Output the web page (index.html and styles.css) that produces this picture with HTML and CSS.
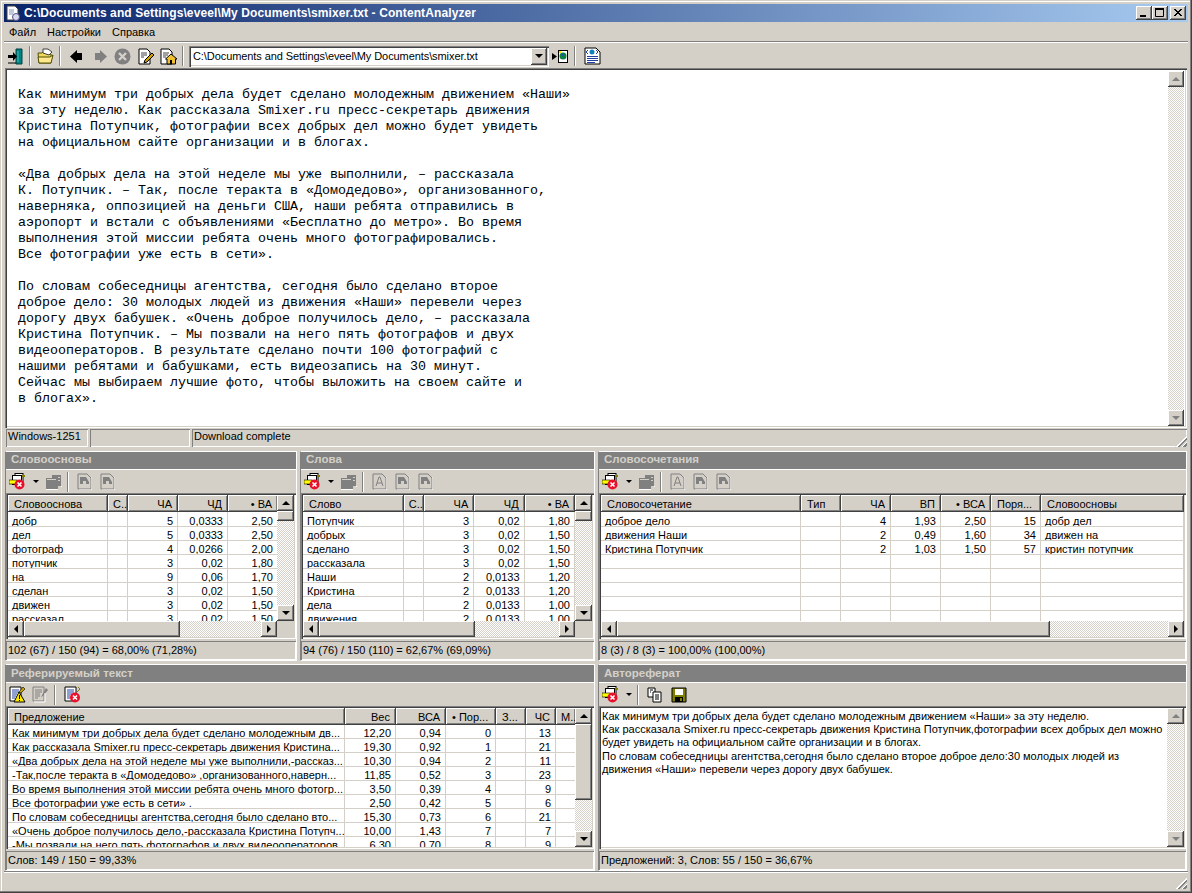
FILE: index.html
```html
<!DOCTYPE html>
<html>
	<head>
		<title>ContentAnalyzer</title>
		<link rel="stylesheet" href="styles.css">
	</head>
	<body>
		<svg class="defs" width="0" height="0">
			<defs>
				<symbol id="i-clear" viewBox="0 0 17 17">
					<rect x="6" y="0.5" width="8" height="9" fill="#fff" stroke="#000"/>
					<rect x="3.5" y="2.5" width="9" height="9" fill="#fff" stroke="#000"/>
					<rect x="0" y="7" width="8" height="4" fill="#ffff00" stroke="#000" stroke-width="0.6"/>
					<rect x="13" y="2" width="3" height="2" fill="#808000"/>
					<circle cx="10.5" cy="11.5" r="5" fill="#e8102a"/>
					<path d="M8.5 9.5l4 4M12.5 9.5l-4 4" stroke="#fff" stroke-width="1.6"/>
				</symbol>
				<symbol id="i-copy-off" viewBox="0 0 17 17">
					<path d="M6 1h10v12h-3v3H1V5h5z" fill="#808080"/>
					<path d="M6 1h10v1H7v3H6zM2 6h9v1H2zM13 4h2v1h-2zM13 7h2v1h-2z" fill="#d4d0c8"/>
					<path d="M1 16h12v1H1zM16 13h1v1h-1z" fill="#fff"/>
				</symbol>
				<symbol id="i-doc-off" viewBox="0 0 15 17">
					<path d="M1 1h9l4 4v11H1z" fill="#d4d0c8" stroke="#808080"/>
					<path d="M3 4h6l3 5v2H9V8H6v3H3z" fill="#808080"/>
					<path d="M15 4v13H2" stroke="#fff" fill="none"/>
				</symbol>
				<symbol id="i-doc-a" viewBox="0 0 15 17">
					<path d="M1 1h9l4 4v11H1z" fill="#d4d0c8" stroke="#808080"/>
					<path d="M4 13l3-9h1l3 9M5 10h5" stroke="#808080" fill="none"/>
					<path d="M15 4v13H2" stroke="#fff" fill="none"/>
				</symbol>
			</defs>
		</svg>

		<div class="window">
			<div class="titlebar">
				<svg class="appicon" width="16" height="16" viewBox="0 0 16 16">
					<path d="M2 1h8l3 3v11H2z" fill="#fff" stroke="#404040"/>
					<circle cx="11" cy="12" r="3.5" fill="#d8d8f0" stroke="#505080"/>
					<path d="M4 5h5M4 7h5M4 9h4" stroke="#8090c0"/>
				</svg>
				<span class="titletext">C:\Documents and Settings\eveel\My Documents\smixer.txt - ContentAnalyzer</span>
				<div class="capbtns">
					<span class="capbtn"><svg width="16" height="14"><rect x="4" y="9" width="6" height="2" fill="#000"/></svg></span>
					<span class="capbtn"><svg width="16" height="14"><path d="M3.5 2.5h8v8h-8z" fill="none" stroke="#000"/><rect x="3" y="2" width="9" height="2" fill="#000"/></svg></span>
					<span class="capbtn capclose"><svg width="16" height="14"><path d="M4 3l7 7M5 3l7 7M11 3l-7 7M12 3l-7 7" stroke="#000"/></svg></span>
				</div>
			</div>

			<div class="menubar">
				<span>Файл</span>
				<span>Настройки</span>
				<span>Справка</span>
			</div>

			<div class="mainbar">
				<svg class="ic" width="17" height="17" viewBox="0 0 17 17">
					<path d="M9 1h6v15H9z" fill="#008080" stroke="#004040"/>
					<path d="M11 3v11" stroke="#40c0c0"/>
					<path d="M1 7h5V4l4 4.5L6 13v-3H1z" fill="#000"/>
					<path d="M1 15h8" stroke="#000"/>
				</svg>
				<i class="sep"></i>
				<svg class="ic" width="17" height="17" viewBox="0 0 17 17">
					<path d="M1 5h4l1-1h5v2h3v9H2z" fill="#f0d860" stroke="#505000"/>
					<path d="M6 1l5 0 4 3-3 3-6-2z" fill="#fff" stroke="#404040"/>
					<path d="M1 9h12l3-2-2 8H2z" fill="#ffe890" stroke="#505000"/>
				</svg>
				<i class="sep"></i>
				<svg class="ic ic-back" width="13" height="13" viewBox="0 0 13 13"><path d="M0 6.5L7 0v3h5v7H7v3z" fill="#000"/></svg>
				<svg class="ic ic-fwd" width="13" height="13" viewBox="0 0 13 13"><path d="M13 6.5L6 0v3H1v7h5v3z" fill="#808080"/></svg>
				<svg class="ic ic-stop" width="17" height="17" viewBox="0 0 17 17">
					<circle cx="8.5" cy="8.5" r="8" fill="#808080"/>
					<path d="M5 5l7 7M12 5l-7 7" stroke="#d4d0c8" stroke-width="2.4"/>
				</svg>
				<svg class="ic ic-edit" width="17" height="17" viewBox="0 0 17 17">
					<path d="M2 1h8l3 3v12H2z" fill="#fff" stroke="#000"/>
					<path d="M4 5h6M4 7h6M4 9h3" stroke="#404040"/>
					<path d="M15 5l2 2-7 7-3 1 1-3z" fill="#d0a000" stroke="#000"/>
				</svg>
				<svg class="ic ic-home" width="17" height="17" viewBox="0 0 17 17">
					<path d="M1 1h8l3 3v12H1z" fill="#fff" stroke="#000"/>
					<path d="M3 5h6M3 7h5M3 9h3" stroke="#404040"/>
					<path d="M11 6l6 5h-1.500v5H7v-5H5.500z" fill="#f0c030" stroke="#000"/>
					<rect x="10" y="12" width="2" height="4" fill="#000"/>
				</svg>
				<i class="sep"></i>
				<div class="combo">
					<span class="combotext">C:\Documents and Settings\eveel\My Documents\smixer.txt</span>
					<span class="btn combobtn"><b class="arrow-down"></b></span>
				</div>
				<svg class="ic ic-go" width="17" height="17" viewBox="0 0 17 17">
					<path d="M0 5l5 3.500L0 12z" fill="#000"/>
					<rect x="6.500" y="2.500" width="9" height="12" fill="#fff" stroke="#000"/>
					<circle cx="11" cy="8" r="3.500" fill="#108040"/>
					<path d="M9 6h3v2h-2z" fill="#2050c0"/>
					<path d="M7 3h2v2H7z" fill="#ffe000"/>
				</svg>
				<i class="sep sep-wide"></i>
				<svg class="ic" width="17" height="18" viewBox="0 0 17 18">
					<path d="M1 1h11l4 4v12H1z" fill="#fff" stroke="#000"/>
					<circle cx="8" cy="5" r="2.500" fill="#1080c0"/>
					<path d="M4 3L2 5l2 2M12 3l2 2-2 2" stroke="#2040a0" fill="none"/>
					<path d="M3 9.500h11M3 11.500h11M3 13.500h11M3 15.500h8" stroke="#2040a0"/>
				</svg>
			</div>

			<div class="editor sunken">
				<pre class="editortext">Как минимум три добрых дела будет сделано молодежным движением «Наши»
за эту неделю. Как рассказала Smixer.ru пресс-секретарь движения
Кристина Потупчик, фотографии всех добрых дел можно будет увидеть
на официальном сайте организации и в блогах.

«Два добрых дела на этой неделе мы уже выполнили, – рассказала
К. Потупчик. – Так, после теракта в «Домодедово», организованного,
наверняка, оппозицией на деньги США, наши ребята отправились в
аэропорт и встали с объявлениями «Бесплатно до метро». Во время
выполнения этой миссии ребята очень много фотографировались.
Все фотографии уже есть в сети».

По словам собеседницы агентства, сегодня было сделано второе
доброе дело: 30 молодых людей из движения «Наши» перевели через
дорогу двух бабушек. «Очень доброе получилось дело, – рассказала
Кристина Потупчик. – Мы позвали на него пять фотографов и двух
видеооператоров. В результате сделано почти 100 фотографий с
нашими ребятами и бабушками, есть видеозапись на 30 минут.
Сейчас мы выбираем лучшие фото, чтобы выложить на своем сайте и
в блогах».</pre>
				<div class="vscroll">
					<span class="btn sbtn"><b class="arrow-up off"></b></span>
					<span class="track"></span>
					<span class="btn sbtn"><b class="arrow-down off"></b></span>
				</div>
			</div>

			<div class="editorstatus">
				<span class="pane pane-enc">Windows-1251</span>
				<span class="pane pane-mid"></span>
				<span class="pane pane-msg">Download complete</span>
				<span class="grip"></span>
			</div>

			<div class="panelrow row-top">
				<section class="panel panel-stems">
					<h2 class="paneltitle">Словоосновы</h2>
					<div class="paneltools">
						<svg class="ic" width="17" height="17"><use href="#i-clear"/></svg>
						<b class="arrow-small"></b>
						<svg class="ic ic-near" width="17" height="17"><use href="#i-copy-off"/></svg>
						<i class="sep"></i>
						<svg class="ic" width="15" height="17"><use href="#i-doc-off"/></svg>
						<svg class="ic ic-gap" width="15" height="17"><use href="#i-doc-off"/></svg>
					</div>
					<div class="list sunken">
						<div class="listbody">
							<table class="grid">
								<colgroup><col class="w100"><col class="w20"><col class="w50"><col class="w50"><col class="w50"></colgroup>
								<thead><tr><th>Словооснова</th><th class="tight">С..</th><th class="r">ЧА</th><th class="r">ЧД</th><th class="r">• ВА</th></tr></thead>
								<tbody>
									<tr><td>добр</td><td></td><td class="r">5</td><td class="r">0,0333</td><td class="r">2,50</td></tr>
									<tr><td>дел</td><td></td><td class="r">5</td><td class="r">0,0333</td><td class="r">2,50</td></tr>
									<tr><td>фотограф</td><td></td><td class="r">4</td><td class="r">0,0266</td><td class="r">2,00</td></tr>
									<tr><td>потупчик</td><td></td><td class="r">3</td><td class="r">0,02</td><td class="r">1,80</td></tr>
									<tr><td>на</td><td></td><td class="r">9</td><td class="r">0,06</td><td class="r">1,70</td></tr>
									<tr><td>сделан</td><td></td><td class="r">3</td><td class="r">0,02</td><td class="r">1,50</td></tr>
									<tr><td>движен</td><td></td><td class="r">3</td><td class="r">0,02</td><td class="r">1,50</td></tr>
									<tr><td>рассказал</td><td></td><td class="r">3</td><td class="r">0,02</td><td class="r">1,50</td></tr>
								</tbody>
							</table>
						</div>
						<div class="vscroll">
							<span class="btn sbtn"><b class="arrow-up"></b></span>
							<span class="btn thumb thumb-small"></span>
							<span class="track"></span>
							<span class="btn sbtn"><b class="arrow-down"></b></span>
						</div>
						<div class="hscroll">
							<span class="btn sbtn"><b class="arrow-left"></b></span>
							<span class="btn thumb thumb-stems"></span>
							<span class="track"></span>
							<span class="btn sbtn"><b class="arrow-right"></b></span>
						</div>
						<div class="corner"></div>
					</div>
					<div class="panelstatus">102 (67) / 150 (94) = 68,00% (71,28%)</div>
				</section>

				<section class="panel panel-words">
					<h2 class="paneltitle">Слова</h2>
					<div class="paneltools">
						<svg class="ic" width="17" height="17"><use href="#i-clear"/></svg>
						<b class="arrow-small"></b>
						<svg class="ic ic-near" width="17" height="17"><use href="#i-copy-off"/></svg>
						<i class="sep"></i>
						<svg class="ic" width="15" height="17"><use href="#i-doc-a"/></svg>
						<svg class="ic ic-gap" width="15" height="17"><use href="#i-doc-off"/></svg>
						<svg class="ic ic-gap" width="15" height="17"><use href="#i-doc-off"/></svg>
					</div>
					<div class="list sunken">
						<div class="listbody">
							<table class="grid">
								<colgroup><col class="w100"><col class="w20"><col class="w50"><col class="w50"><col class="w50"></colgroup>
								<thead><tr><th>Слово</th><th class="tight">С..</th><th class="r">ЧА</th><th class="r">ЧД</th><th class="r">• ВА</th></tr></thead>
								<tbody>
									<tr><td>Потупчик</td><td></td><td class="r">3</td><td class="r">0,02</td><td class="r">1,80</td></tr>
									<tr><td>добрых</td><td></td><td class="r">3</td><td class="r">0,02</td><td class="r">1,50</td></tr>
									<tr><td>сделано</td><td></td><td class="r">3</td><td class="r">0,02</td><td class="r">1,50</td></tr>
									<tr><td>рассказала</td><td></td><td class="r">3</td><td class="r">0,02</td><td class="r">1,50</td></tr>
									<tr><td>Наши</td><td></td><td class="r">2</td><td class="r">0,0133</td><td class="r">1,20</td></tr>
									<tr><td>Кристина</td><td></td><td class="r">2</td><td class="r">0,0133</td><td class="r">1,20</td></tr>
									<tr><td>дела</td><td></td><td class="r">2</td><td class="r">0,0133</td><td class="r">1,00</td></tr>
									<tr><td>движения</td><td></td><td class="r">2</td><td class="r">0,0133</td><td class="r">1,00</td></tr>
								</tbody>
							</table>
						</div>
						<div class="vscroll">
							<span class="btn sbtn"><b class="arrow-up"></b></span>
							<span class="btn thumb thumb-small"></span>
							<span class="track"></span>
							<span class="btn sbtn"><b class="arrow-down"></b></span>
						</div>
						<div class="hscroll">
							<span class="btn sbtn"><b class="arrow-left"></b></span>
							<span class="btn thumb thumb-stems"></span>
							<span class="track"></span>
							<span class="btn sbtn"><b class="arrow-right"></b></span>
						</div>
						<div class="corner"></div>
					</div>
					<div class="panelstatus">94 (76) / 150 (110) = 62,67% (69,09%)</div>
				</section>

				<section class="panel panel-phrases">
					<h2 class="paneltitle">Словосочетания</h2>
					<div class="paneltools">
						<svg class="ic" width="17" height="17"><use href="#i-clear"/></svg>
						<b class="arrow-small"></b>
						<svg class="ic ic-near" width="17" height="17"><use href="#i-copy-off"/></svg>
						<i class="sep"></i>
						<svg class="ic" width="15" height="17"><use href="#i-doc-a"/></svg>
						<svg class="ic ic-gap" width="15" height="17"><use href="#i-doc-off"/></svg>
						<svg class="ic ic-gap" width="15" height="17"><use href="#i-doc-off"/></svg>
					</div>
					<div class="list list-nov sunken">
						<div class="listbody">
							<table class="grid">
								<colgroup><col class="w200"><col class="w40"><col class="w50"><col class="w50"><col class="w50"><col class="w50"><col></colgroup>
								<thead><tr><th>Словосочетание</th><th>Тип</th><th class="r">ЧА</th><th class="r">ВП</th><th class="r">• ВСА</th><th>Поря...</th><th>Словоосновы</th></tr></thead>
								<tbody>
									<tr><td>доброе дело</td><td></td><td class="r">4</td><td class="r">1,93</td><td class="r">2,50</td><td class="r">15</td><td>добр дел</td></tr>
									<tr><td>движения Наши</td><td></td><td class="r">2</td><td class="r">0,49</td><td class="r">1,60</td><td class="r">34</td><td>движен на</td></tr>
									<tr><td>Кристина Потупчик</td><td></td><td class="r">2</td><td class="r">1,03</td><td class="r">1,50</td><td class="r">57</td><td>кристин потупчик</td></tr>
									<tr><td></td><td></td><td></td><td></td><td></td><td></td><td></td></tr>
									<tr><td></td><td></td><td></td><td></td><td></td><td></td><td></td></tr>
									<tr><td></td><td></td><td></td><td></td><td></td><td></td><td></td></tr>
									<tr><td></td><td></td><td></td><td></td><td></td><td></td><td></td></tr>
									<tr><td></td><td></td><td></td><td></td><td></td><td></td><td></td></tr>
								</tbody>
							</table>
						</div>
						<div class="hscroll">
							<span class="btn sbtn"><b class="arrow-left"></b></span>
							<span class="btn thumb thumb-phrases"></span>
							<span class="track"></span>
							<span class="btn sbtn"><b class="arrow-right"></b></span>
						</div>
					</div>
					<div class="panelstatus">8 (3) / 8 (3) = 100,00% (100,00%)</div>
				</section>
			</div>

			<div class="panelrow row-bottom">
				<section class="panel panel-source">
					<h2 class="paneltitle">Реферируемый текст</h2>
					<div class="paneltools">
						<svg class="ic" width="17" height="17" viewBox="0 0 17 17">
							<path d="M1 1h11v14H1z" fill="#fff" stroke="#000"/>
							<path d="M3 4h7M3 6h7M3 8h5M3 10h4M3 12h3" stroke="#2040a0"/>
							<path d="M10 6l6 10H5z" fill="#ffe800" stroke="#000"/>
							<path d="M10.500 9v4M10.500 14v1" stroke="#000"/>
							<path d="M14 1l2 2-4 4-2-1z" fill="#d0a000" stroke="#000" stroke-width="0.6"/>
						</svg>
						<svg class="ic ic-near" width="17" height="17" viewBox="0 0 17 17">
							<path d="M1 1h11v14H1z" fill="#d4d0c8" stroke="#808080"/>
							<path d="M3 4h7M3 6h7M3 8h5M3 10h5M3 12h3" stroke="#808080"/>
							<path d="M14 2l2 2-5 6-2 1z" fill="#808080"/>
							<path d="M13 7v9H2" stroke="#fff" fill="none"/>
						</svg>
						<i class="sep"></i>
						<svg class="ic" width="17" height="17" viewBox="0 0 17 17">
							<path d="M1 1h11v14H1z" fill="#fff" stroke="#000"/>
							<path d="M3 4h7M3 6h7M3 8h5M3 10h3M3 12h3" stroke="#2040a0"/>
							<path d="M14 1l2 2-3 3" stroke="#808000" fill="none"/>
							<circle cx="11" cy="11.500" r="5" fill="#e8102a"/>
							<path d="M9 9.500l4 4M13 9.500l-4 4" stroke="#fff" stroke-width="1.600"/>
						</svg>
					</div>
					<div class="list list-noh sunken">
						<div class="listbody">
							<table class="grid">
								<colgroup><col class="w337"><col class="w51"><col class="w50"><col class="w50"><col class="w30"><col class="w30"><col class="w20"></colgroup>
								<thead><tr><th>Предложение</th><th class="r">Вес</th><th class="r">ВСА</th><th>• Пор...</th><th>З...</th><th class="r">ЧС</th><th class="tight">М..</th></tr></thead>
								<tbody>
									<tr><td>Как минимум три добрых дела будет сделано молодежным дв...</td><td class="r">12,20</td><td class="r">0,94</td><td class="r">0</td><td></td><td class="r">13</td><td></td></tr>
									<tr><td>Как рассказала Smixer.ru пресс-секретарь движения Кристина...</td><td class="r">19,30</td><td class="r">0,92</td><td class="r">1</td><td></td><td class="r">21</td><td></td></tr>
									<tr><td>«Два добрых дела на этой неделе мы уже выполнили,-рассказ...</td><td class="r">10,30</td><td class="r">0,94</td><td class="r">2</td><td></td><td class="r">11</td><td></td></tr>
									<tr><td>-Так,после теракта в «Домодедово» ,организованного,наверн...</td><td class="r">11,85</td><td class="r">0,52</td><td class="r">3</td><td></td><td class="r">23</td><td></td></tr>
									<tr><td>Во время выполнения этой миссии ребята очень много фотогр...</td><td class="r">3,50</td><td class="r">0,39</td><td class="r">4</td><td></td><td class="r">9</td><td></td></tr>
									<tr><td>Все фотографии уже есть в сети» .</td><td class="r">2,50</td><td class="r">0,42</td><td class="r">5</td><td></td><td class="r">6</td><td></td></tr>
									<tr><td>По словам собеседницы агентства,сегодня было сделано вто...</td><td class="r">15,30</td><td class="r">0,73</td><td class="r">6</td><td></td><td class="r">21</td><td></td></tr>
									<tr><td>«Очень доброе получилось дело,-рассказала Кристина Потупч...</td><td class="r">10,00</td><td class="r">1,43</td><td class="r">7</td><td></td><td class="r">7</td><td></td></tr>
									<tr><td>-Мы позвали на него пять фотографов и двух видеооператоров...</td><td class="r">6,30</td><td class="r">0,70</td><td class="r">8</td><td></td><td class="r">9</td><td></td></tr>
								</tbody>
							</table>
						</div>
						<div class="vscroll">
							<span class="btn sbtn"><b class="arrow-up"></b></span>
							<span class="btn thumb thumb-source"></span>
							<span class="track"></span>
							<span class="btn sbtn"><b class="arrow-down"></b></span>
						</div>
					</div>
					<div class="panelstatus">Слов: 149 / 150 = 99,33%</div>
				</section>

				<section class="panel panel-abstract">
					<h2 class="paneltitle">Автореферат</h2>
					<div class="paneltools">
						<svg class="ic" width="17" height="17"><use href="#i-clear"/></svg>
						<b class="arrow-small"></b>
						<i class="sep"></i>
						<svg class="ic" width="16" height="16" viewBox="0 0 16 16">
							<path d="M1 1h7v9H1z" fill="#fff" stroke="#000"/>
							<path d="M6 5h8v10H6z" fill="#fff" stroke="#000"/>
							<path d="M3 3h3M3 5h1M8 8h4M8 10h4M8 12h4" stroke="#000"/>
						</svg>
						<svg class="ic ic-gap" width="16" height="16" viewBox="0 0 16 16">
							<path d="M1 1h14v14H1z" fill="#808000" stroke="#000"/>
							<rect x="4" y="2" width="8" height="6" fill="#fff"/>
							<rect x="4" y="10" width="8" height="5" fill="#000"/>
							<rect x="9" y="11" width="2" height="3" fill="#808000"/>
						</svg>
					</div>
					<div class="list list-noh sunken">
						<div class="abstracttext">Как минимум три добрых дела будет сделано молодежным движением «Наши» за эту неделю.<br>Как рассказала Smixer.ru пресс-секретарь движения Кристина Потупчик,фотографии всех добрых дел можно будет увидеть на официальном сайте организации и в блогах.<br>По словам собеседницы агентства,сегодня было сделано второе доброе дело:30 молодых людей из движения «Наши» перевели через дорогу двух бабушек.</div>
						<div class="vscroll">
							<span class="btn sbtn"><b class="arrow-up off"></b></span>
							<span class="track"></span>
							<span class="btn sbtn"><b class="arrow-down off"></b></span>
						</div>
					</div>
					<div class="panelstatus">Предложений: 3, Слов: 55 / 150 = 36,67%</div>
				</section>
			</div>

			<div class="windowstatus">
				<span class="grip"></span>
			</div>
		</div>
	</body>
</html>
```

FILE: styles.css
```css
* {
	box-sizing: border-box;
}

body {
	margin: 0;
	background: #d4d0c8;
	font-family: "Liberation Sans", Arial, sans-serif;
	font-size: 11px;
	color: #000;
}

.defs {
	position: absolute;
}

.window {
	width: 1192px;
	height: 893px;
	display: flex;
	flex-direction: column;
	overflow: hidden;
	padding: 4px 4px 3px 4px;
	background: #d4d0c8;
	box-shadow: inset -1px -1px #404040, inset -2px -2px #808080, inset 1px 1px #d4d0c8, inset 2px 2px #fff;
}

/* title bar */
.titlebar {
	flex: 0 0 18px;
	display: flex;
	align-items: center;
	padding: 0 2px 0 1px;
	background: linear-gradient(to right, #0a246a, #a6caf0);
}

.appicon {
	flex: none;
}

.titletext {
	margin-left: 3px;
	font-weight: bold;
	font-size: 12px;
	letter-spacing: 0.11px;
	color: #fff;
	white-space: nowrap;
}

.capbtns {
	display: flex;
	margin-left: auto;
}

.capbtn {
	width: 16px;
	height: 14px;
	display: block;
	background: #d4d0c8;
	box-shadow: inset -1px -1px #404040, inset 1px 1px #fff, inset -2px -2px #808080;
}

.capbtn svg {
	display: block;
}

.capclose {
	margin-left: 2px;
}

/* menu */
.menubar {
	flex: 0 0 20px;
	display: flex;
	align-items: center;
	padding-left: 5px;
	gap: 11px;
	border-bottom: 1px solid #808080;
	box-shadow: 0 1px #fff;
}

/* main toolbar */
.mainbar {
	flex: 0 0 26px;
	display: flex;
	align-items: center;
	padding: 2px 0 0 3px;
}

.ic {
	flex: none;
	display: block;
}

.sep {
	flex: none;
	width: 2px;
	height: 20px;
	margin: 0 6px 0 5px;
	background: #808080;
	border-right: 1px solid #fff;
}

.sep-wide {
	margin-right: 8px;
}

.ic-back {
	margin-left: 3px;
}

.ic-fwd {
	margin-left: 11px;
}

.ic-stop {
	margin-left: 7px;
}

.ic-edit,
.ic-home {
	margin-left: 6px;
}

.combo {
	width: 360px;
	height: 21px;
	margin-left: -1px;
	display: flex;
	padding: 2px;
	background: #fff;
	box-shadow: inset 1px 1px #808080, inset 2px 2px #404040, inset -1px -1px #fff, inset -2px -2px #d4d0c8;
}

.combotext {
	flex: 1;
	padding: 2px 0 0 2px;
	letter-spacing: -0.08px;
	white-space: nowrap;
	overflow: hidden;
}

.combobtn {
	flex: 0 0 16px;
}

.ic-go {
	margin-left: 3px;
}

/* shared bevels */
.sunken {
	padding: 2px;
	box-shadow: inset 1px 1px #808080, inset 2px 2px #404040, inset -1px -1px #fff, inset -2px -2px #d4d0c8;
}

.btn {
	display: flex;
	align-items: center;
	justify-content: center;
	background: #d4d0c8;
	box-shadow: inset -1px -1px #404040, inset 1px 1px #fff, inset -2px -2px #808080;
}

.arrow-up,
.arrow-down {
	width: 0;
	height: 0;
	border-left: 4px solid transparent;
	border-right: 4px solid transparent;
}

.arrow-up {
	border-bottom: 4px solid #000;
}

.arrow-down {
	border-top: 4px solid #000;
}

.arrow-up.off {
	border-bottom-color: #808080;
}

.arrow-down.off {
	border-top-color: #808080;
}

.arrow-left,
.arrow-right {
	width: 0;
	height: 0;
	border-top: 4px solid transparent;
	border-bottom: 4px solid transparent;
}

.arrow-left {
	border-right: 4px solid #000;
}

.arrow-right {
	border-left: 4px solid #000;
}

.arrow-small {
	flex: none;
	width: 0;
	height: 0;
	margin: 0 0 0 7px;
	border-left: 3px solid transparent;
	border-right: 3px solid transparent;
	border-top: 3px solid #000;
}

/* scrollbars */
.vscroll,
.hscroll {
	display: flex;
	min-height: 0;
}

.vscroll {
	flex-direction: column;
}

.sbtn {
	flex: 0 0 16px;
}

.track {
	flex: 1;
	background: repeating-conic-gradient(#d4d0c8 0 25%, #fff 0 50%) 0 0 / 2px 2px;
}

.thumb-small {
	flex: 0 0 10px;
}

.thumb-stems {
	flex: 0 0 156px;
}

.thumb-phrases {
	flex: 0 0 433px;
}

.thumb-source {
	flex: 0 0 76px;
}

/* editor */
.editor {
	flex: 0 0 360px;
	display: flex;
	margin: 0 1px 0 1px;
	padding: 3px 3px 2px 2px;
	background: #fff;
}

.editortext {
	flex: 1;
	margin: 0;
	padding: 16px 0 0 11px;
	font-family: "Liberation Mono", "Courier New", monospace;
	font-size: 13.33px;
	line-height: 16px;
	overflow: hidden;
}

.editor .vscroll {
	flex: 0 0 16px;
}

.editorstatus {
	flex: 0 0 20px;
	display: flex;
	gap: 2px;
	padding: 1px 0 0 2px;
	position: relative;
}

.pane {
	height: 18px;
	padding: 0 0 0 2px;
	box-shadow: inset 1px 1px #808080, inset -1px -1px #fff;
	line-height: 14px;
}

.pane-enc {
	width: 82px;
}

.pane-mid {
	width: 100px;
}

.pane-msg {
	flex: 1;
	margin-right: 1px;
}

.grip {
	position: absolute;
	right: 1px;
	bottom: 1px;
	width: 12px;
	height: 12px;
	background: repeating-linear-gradient(135deg, #d4d0c8 0 1px, #fff 1px 2px, #808080 2px 4px);
	clip-path: polygon(100% 0, 100% 100%, 0 100%);
}

/* panels */
.panelrow {
	display: flex;
	gap: 3px;
	padding: 0 1px;
	min-height: 0;
}

.row-top {
	flex: 0 0 210px;
	margin-top: 3px;
}

.row-bottom {
	flex: 0 0 207px;
	margin-top: 3px;
}

.panel {
	display: flex;
	flex-direction: column;
	min-height: 0;
	border: 1px solid;
	border-color: #fff #fff #fff #808080;
}

.panel-stems {
	width: 292px;
}

.panel-words {
	width: 295px;
}

.panel-phrases {
	flex: 1;
	min-width: 0;
}

.panel-source {
	width: 590px;
}

.panel-abstract {
	flex: 1;
	min-width: 0;
}

.paneltitle {
	flex: 0 0 18px;
	margin: 0;
	padding: 0 0 0 5px;
	background: #808080;
	border-bottom: 1px solid #fff;
	color: #d4d0c8;
	font-size: 11.5px;
	font-weight: bold;
	line-height: 15px;
}

.row-bottom .paneltitle {
	padding-top: 1px;
}

.paneltools {
	flex: 0 0 23px;
	display: flex;
	align-items: center;
	padding-left: 3px;
}

.paneltools .sep {
	margin-right: 8px;
}

.ic-gap {
	margin-left: 8px;
}

.ic-near {
	margin-left: 6px;
}

.list {
	flex: 1;
	min-height: 0;
	display: grid;
	grid-template-columns: minmax(0, 1fr) 17px;
	grid-template-rows: minmax(0, 1fr) 16px;
	background: #fff;
}

.list-nov {
	grid-template-columns: minmax(0, 1fr);
}

.list-noh {
	grid-template-rows: minmax(0, 1fr);
}

.listbody {
	overflow: hidden;
	min-height: 0;
}

.corner {
	background: #d4d0c8;
}

.panelstatus {
	flex: 0 0 19px;
	margin: 2px 0 0 0;
	padding: 2px 0 0 2px;
	box-shadow: inset 1px 1px #808080, inset -1px -1px #fff;
	white-space: nowrap;
	line-height: 14px;
}

/* list grids */
.grid {
	width: 100%;
	table-layout: fixed;
	border-collapse: separate;
	border-spacing: 0;
}

.w20 { width: 20px; }
.w30 { width: 30px; }
.w40 { width: 40px; }
.w50 { width: 50px; }
.w51 { width: 51px; }
.w100 { width: 100px; }
.w200 { width: 200px; }
.w337 { width: 337px; }

.grid th {
	height: 17px;
	padding: 0 6px;
	background: #d4d0c8;
	box-shadow: inset -1px -1px #404040, inset 1px 1px #fff, inset -2px -2px #808080;
	font-weight: normal;
	text-align: left;
	white-space: nowrap;
	overflow: hidden;
	line-height: 14px;
}

.grid th.tight {
	padding: 0 0 0 5px;
}

.grid td {
	height: 14px;
	padding: 3px 4px 0;
	border-right: 1px solid #d4d0c8;
	border-bottom: 1px solid #d4d0c8;
	white-space: nowrap;
	overflow: hidden;
	line-height: 10px;
}

.grid tbody tr:first-child td {
	height: 15px;
	padding-top: 4px;
}

.panel-source .grid tbody tr:first-child td {
	height: 14px;
	padding-top: 3px;
}

.grid .r {
	text-align: right;
}

/* abstract */
.abstracttext {
	padding: 2px 4px 0 1px;
	line-height: 13.2px;
}

.windowstatus {
	flex: 0 0 19px;
	position: relative;
	border-top: 1px solid #808080;
	box-shadow: inset 0 1px #fff;
}
```
